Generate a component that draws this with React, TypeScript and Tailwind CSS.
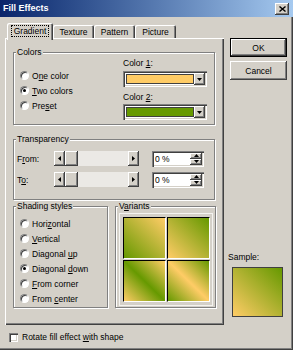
import React from "react";

const raised =
	"bg-[#d4d0c8] shadow-[inset_-1px_-1px_0_#404040,inset_1px_1px_0_#ffffff,inset_-2px_-2px_0_#808080]";
const sunken =
	"bg-white shadow-[inset_1px_1px_0_#808080,inset_2px_2px_0_#404040,inset_-1px_-1px_0_#ffffff,inset_-2px_-2px_0_#d4d0c8]";

const yellow = "#ffcc66";
const green = "#669900";

const Tri = ({ dir, w = 5 }: { dir: "up" | "down" | "left" | "right"; w?: number }) => {
	const h = Math.ceil(w / 2);
	if (dir === "up" || dir === "down") {
		const pts = dir === "up" ? `0,${h} ${w},${h} ${w / 2},0` : `0,0 ${w},0 ${w / 2},${h}`;
		return (
			<svg width={w} height={h} viewBox={`0 0 ${w} ${h}`}>
				<polygon points={pts} fill="#000" />
			</svg>
		);
	}
	const pts = dir === "left" ? `${h},0 ${h},${w} 0,${w / 2}` : `0,0 0,${w} ${h},${w / 2}`;
	return (
		<svg width={h} height={w} viewBox={`0 0 ${h} ${w}`}>
			<polygon points={pts} fill="#000" />
		</svg>
	);
};

const Group = ({
	label,
	className,
	children,
}: {
	label: React.ReactNode;
	className: string;
	children?: React.ReactNode;
}) => {
	return (
		<div
			className={`relative border border-[#808080] shadow-[1px_1px_0_#ffffff,inset_1px_1px_0_#ffffff] ${className}`}
		>
			<span className="absolute -top-[6px] left-[2px] bg-[#d4d0c8] px-[1px] leading-[10px]">
				{label}
			</span>
			{children}
		</div>
	);
};

const Radio = ({ checked, children }: { checked?: boolean; children: React.ReactNode }) => {
	return (
		<div className="flex h-[15px] items-center gap-[3px]">
			<span className="flex h-[9px] w-[9px] items-center justify-center rounded-full border border-b-white border-l-[#808080] border-r-white border-t-[#808080] bg-white shadow-[inset_1px_1px_0_#404040]">
				{checked ? <span className="h-[3px] w-[3px] rounded-full bg-black"></span> : undefined}
			</span>
			<span className="leading-[10px]">{children}</span>
		</div>
	);
};

const Combo = ({ color }: { color: string }) => {
	return (
		<div className={`flex h-[16px] w-[84px] items-center p-[2px] ${sunken}`}>
			<div className="ml-px h-[10px] w-[68px] border border-[#404040]" style={{ background: color }}></div>
			<div className={`ml-auto flex h-[12px] w-[11px] items-center justify-center ${raised}`}>
				<Tri dir="down" w={5} />
			</div>
		</div>
	);
};

const Slider = () => {
	return (
		<div className="flex h-[15px] w-[85px]">
			<div className={`flex w-[11px] items-center justify-center ${raised}`}>
				<Tri dir="left" w={5} />
			</div>
			<div className={`w-[13px] ${raised}`}></div>
			<div className="flex-1 bg-[#ebe9e5]"></div>
			<div className={`flex w-[11px] items-center justify-center ${raised}`}>
				<Tri dir="right" w={5} />
			</div>
		</div>
	);
};

const Spin = () => {
	return (
		<div className={`flex h-[16px] w-[52px] items-center p-[2px] ${sunken}`}>
			<span className="pl-px leading-[10px]">0 %</span>
			<div className="ml-auto flex h-[12px] w-[12px] flex-col">
				<div className={`flex flex-1 items-center justify-center ${raised}`}>
					<Tri dir="up" w={5} />
				</div>
				<div className={`flex flex-1 items-center justify-center ${raised}`}>
					<Tri dir="down" w={5} />
				</div>
			</div>
		</div>
	);
};

const variants = [
	`linear-gradient(to bottom left, ${yellow}, ${green})`,
	`linear-gradient(to bottom left, ${green}, ${yellow})`,
	`linear-gradient(to bottom left, ${yellow}, ${green} 50%, ${yellow})`,
	`linear-gradient(to bottom left, ${green}, ${yellow} 50%, ${green})`,
];

export default function App() {
	return (
		<div className="flex h-[350px] w-[293px] flex-col overflow-hidden bg-[#d4d0c8] font-['Liberation_Sans',Arial,sans-serif] text-[8.5px] text-black shadow-[inset_-1px_-1px_0_#404040,inset_-2px_-2px_0_#808080]">
			{/* title bar */}
			<div className="flex h-[17px] items-center bg-gradient-to-r from-[#0a246a] to-[#a6caf0] pl-[3px] pr-[4px]">
				<span className="text-[9px] font-bold text-white">Fill Effects</span>
				<div className={`ml-auto flex h-[12px] w-[14px] items-center justify-center ${raised}`}>
					<svg width="7" height="6" viewBox="0 0 7 6">
						<path d="M0.5 0.5 L6.5 5.5 M6.5 0.5 L0.5 5.5" stroke="#000" strokeWidth="1.4" />
					</svg>
				</div>
			</div>

			<div className="flex pl-[5px] pt-[6px]">
				{/* left: tabs + panel */}
				<div className="flex w-[219px] flex-col">
					<div className="relative z-10 flex h-[15px] items-end pl-[2px]">
						<div className="-mb-[2px] flex h-[17px] w-[46px] items-start justify-center rounded-t-[2px] bg-[#d4d0c8] pt-[2px] shadow-[inset_1px_1px_0_#ffffff,inset_-1px_0_0_#404040,inset_-2px_0_0_#808080]">
							<span className="border border-dotted border-black px-[2px] leading-[10px]">Gradient</span>
						</div>
						{["Texture", "Pattern", "Picture"].map((t) => (
							<div
								key={t}
								className="flex h-[13px] w-[41px] items-center justify-center rounded-t-[2px] shadow-[inset_1px_1px_0_#ffffff,inset_-1px_0_0_#404040,inset_-2px_0_0_#808080]"
							>
								<span className="leading-[10px]">{t}</span>
							</div>
						))}
					</div>
					<div className="flex h-[287px] flex-col pl-[8px] pt-[14px] shadow-[inset_1px_1px_0_#ffffff,inset_-1px_-1px_0_#404040,inset_-2px_-2px_0_#808080]">
						<Group label="Colors" className="flex h-[73px] w-[202px]">
							<div className="flex flex-col pl-[6px] pt-[15px]">
								<Radio>
									O<u>n</u>e color
								</Radio>
								<Radio checked>
									<u>T</u>wo colors
								</Radio>
								<Radio>
									Pre<u>s</u>et
								</Radio>
							</div>
							<div className="ml-auto flex flex-col pr-[7px] pt-[5px]">
								<span className="leading-[10px]">
									Color <u>1</u>:
								</span>
								<div className="mt-[3px]">
									<Combo color={yellow} />
								</div>
								<span className="mt-[5px] leading-[10px]">
									Color <u>2</u>:
								</span>
								<div className="mt-[2px]">
									<Combo color={green} />
								</div>
							</div>
						</Group>

						<Group label="Transparency" className="mt-[14px] flex h-[61px] w-[202px] flex-col gap-[4px] pl-[3px] pt-[10px]">
							<div className="flex h-[17px] items-center">
								<span className="w-[37px] leading-[10px]">
									F<u>r</u>om:
								</span>
								<Slider />
								<div className="ml-[13px]">
									<Spin />
								</div>
							</div>
							<div className="flex h-[17px] items-center">
								<span className="w-[37px] leading-[10px]">
									T<u>o</u>:
								</span>
								<Slider />
								<div className="ml-[13px]">
									<Spin />
								</div>
							</div>
						</Group>

						<div className="mt-[6px] flex gap-[7px]">
							<Group label="Shading styles" className="flex h-[102px] w-[95px] flex-col pl-[6px] pt-[9px]">
								<Radio>
									Hori<u>z</u>ontal
								</Radio>
								<Radio>
									<u>V</u>ertical
								</Radio>
								<Radio>
									Diagonal <u>u</u>p
								</Radio>
								<Radio checked>
									Diagonal <u>d</u>own
								</Radio>
								<Radio>
									<u>F</u>rom corner
								</Radio>
								<Radio>
									From <u>c</u>enter
								</Radio>
							</Group>
							<Group
								label={
									<>
										V<u>a</u>riants
									</>
								}
								className="h-[102px] w-[101px] pl-[3px] pt-[6px]"
							>
								<div className="grid h-[93px] w-[94px] grid-cols-2 content-center justify-center gap-[1px] border border-[#f4f3f0] px-[3px]">
									{variants.map((v, i) => (
										<div
											key={i}
											className="h-[42px] w-[43px] border border-b-white border-l-black border-r-white border-t-black"
											style={{ background: v }}
										></div>
									))}
								</div>
							</Group>
						</div>
					</div>
				</div>

				{/* right column */}
				<div className="ml-[6px] mt-[15px] flex w-[57px] flex-col">
					<div className="h-[19px] border border-black">
						<div className={`flex h-full items-center justify-center ${raised}`}>
							<span className="leading-[10px]">OK</span>
						</div>
					</div>
					<div className={`mt-[4px] flex h-[19px] items-center justify-center ${raised}`}>
						<span className="leading-[10px]">Cancel</span>
					</div>
					<span className="ml-[-2px] mt-[172px] leading-[10px]">Sample:</span>
					<div
						className="ml-[2px] mt-[5px] h-[50px] w-[51px] border border-[#404040]"
						style={{ background: `linear-gradient(to bottom left, ${green}, ${yellow})` }}
					></div>
				</div>
			</div>

			<div className="flex items-center gap-[4px] pl-[9px] pt-[7px]">
				<span className={`h-[9px] w-[9px] ${sunken}`}></span>
				<span className="leading-[10px]">
					Rotate fill effect <u>w</u>ith shape
				</span>
			</div>
		</div>
	);
}
